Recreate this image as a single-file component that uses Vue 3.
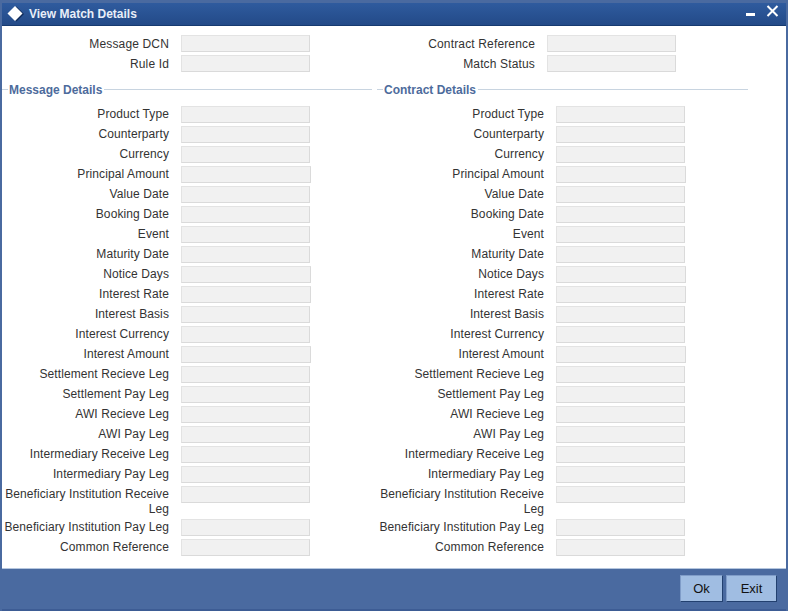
<template>
  <div class="window">
    <!-- Title bar -->
    <div class="titlebar">
      <svg class="logo" width="18" height="16" viewBox="0 0 18 16">
        <polygon points="9.5,0.5 17,8 9.5,15.5 2,8" fill="#0f2a58" />
        <polygon points="8,0 15.5,7.5 8,15 0.5,7.5" fill="#fff" />
      </svg>
      <span class="title">View Match Details</span>
      <div class="win-controls">
        <svg width="9" height="3" viewBox="0 0 9 3" class="min-icon"><rect width="9" height="3" fill="#fff" /></svg>
        <svg width="13" height="12" viewBox="0 0 13 12" class="close-icon">
          <path d="M1.5 1 L11.5 11 M11.5 1 L1.5 11" stroke="#fff" stroke-width="2" fill="none" />
        </svg>
      </div>
    </div>

    <!-- Form body -->
    <div class="body">
      <div class="head-rows">
        <div v-for="pair in headRows" :key="pair[0]" class="head-row">
          <div v-for="label in pair" :key="label" class="field head-field">
            <label>{{ label }}</label>
            <div class="input"></div>
          </div>
        </div>
      </div>

      <div class="sections">
        <div v-for="section in sections" :key="section.title" class="section">
          <div class="legend"><span>{{ section.title }}</span></div>
          <div class="rows">
            <div v-for="row in rows" :key="row.label" class="field">
              <label>{{ row.label }}</label>
              <div :class="['input', { wide: row.wide }]"></div>
            </div>
          </div>
        </div>
      </div>
    </div>

    <!-- Footer -->
    <div class="footer">
      <button class="btn ok">Ok</button>
      <button class="btn exit">Exit</button>
    </div>
  </div>
</template>

<script setup>
const headRows = [
  ['Message DCN', 'Contract Reference'],
  ['Rule Id', 'Match Status']
];

const sections = [{ title: 'Message Details' }, { title: 'Contract Details' }];

const rows = [
  { label: 'Product Type' },
  { label: 'Counterparty' },
  { label: 'Currency' },
  { label: 'Principal Amount', wide: true },
  { label: 'Value Date' },
  { label: 'Booking Date' },
  { label: 'Event' },
  { label: 'Maturity Date' },
  { label: 'Notice Days', wide: true },
  { label: 'Interest Rate', wide: true },
  { label: 'Interest Basis' },
  { label: 'Interest Currency' },
  { label: 'Interest Amount', wide: true },
  { label: 'Settlement Recieve Leg' },
  { label: 'Settlement Pay Leg' },
  { label: 'AWI Recieve Leg' },
  { label: 'AWI Pay Leg' },
  { label: 'Intermediary Receive Leg' },
  { label: 'Intermediary Pay Leg' },
  { label: 'Beneficiary Institution Receive Leg' },
  { label: 'Beneficiary Institution Pay Leg' },
  { label: 'Common Reference' }
];
</script>

<style>
html,
body {
  margin: 0;
  padding: 0;
}
</style>

<style scoped>
.window {
  width: 788px;
  height: 611px;
  box-sizing: border-box;
  display: flex;
  flex-direction: column;
  background: #4a6aa0;
  padding: 3px 2px 0 2px;
  font-family: 'Liberation Sans', Arial, sans-serif;
  font-size: 12px;
  color: #333;
  overflow: hidden;
}

.titlebar {
  height: 23px;
  flex: none;
  padding: 0 7px 0 5px;
  box-sizing: border-box;
  display: flex;
  align-items: center;
  border-bottom: 1px solid #163a70;
  background: linear-gradient(#2f5b9e, #234a88);
  color: #e8eef8;
}

.logo {
  flex: none;
  margin-right: 4px;
}

.title {
  font-weight: bold;
  font-size: 12px;
  flex: 1;
}

.win-controls {
  display: flex;
  align-items: flex-start;
  gap: 11px;
  height: 22px;
}

.min-icon {
  margin-top: 10px;
}

.close-icon {
  margin-top: 2px;
}

.body {
  flex: 1;
  background: #fff;
  padding-top: 9px;
  min-height: 0;
}

.head-rows {
  display: flex;
  flex-direction: column;
  gap: 1px;
}

.head-row {
  display: flex;
}

.head-row .head-field {
  width: 366px;
}

.sections {
  display: flex;
  margin-top: 6px;
}

.section {
  width: 375px;
}

.legend {
  height: 18px;
  display: flex;
  align-items: center;
  font-weight: bold;
  color: #4d6b9c;
}

.legend span {
  margin-right: 2px;
  padding-top: 2px;
}

.legend::before {
  content: '';
  width: 6px;
  margin-right: 1px;
  border-top: 1px solid #c8d4e0;
}

.legend::after {
  content: '';
  flex: 1;
  border-top: 1px solid #c8d4e0;
}

.section:first-child .legend {
  margin-right: 5px;
}

.section:last-child .legend {
  margin-right: 4px;
}

.rows {
  display: flex;
  flex-direction: column;
  gap: 3px;
  margin-top: 8px;
}

.field {
  display: flex;
  align-items: flex-start;
}

.field label {
  width: 167px;
  padding-left: 2px;
  box-sizing: border-box;
  text-align: right;
  letter-spacing: 0.1px;
  flex: none;
}

.head-field label {
  line-height: 19px;
  letter-spacing: 0.15px;
}

/* two line labels grow the row by one line less a pixel */
.rows .field label {
  line-height: 15px;
  padding-top: 1px;
  margin-bottom: -1px;
}

.input {
  width: 129px;
  height: 17px;
  margin-left: 12px;
  box-sizing: border-box;
  background: #f1f1f1;
  border: 1px solid #e3e3e3;
  border-bottom-color: #dadada;
  border-right-color: #dadada;
}

.input.wide {
  width: 130px;
}

.footer {
  height: 43px;
  flex: none;
  box-sizing: border-box;
  border-top: 1px solid #b5c6de;
  border-bottom: 2px solid #3d5c94;
  display: flex;
  justify-content: flex-end;
  gap: 3px;
  padding: 6px 9px 0 0;
}

.btn {
  height: 27px;
  padding: 0;
  box-sizing: border-box;
  background: #a0bde2;
  color: #111;
  font-family: inherit;
  font-size: 13px;
  border: 1px solid;
  border-color: #7f9cc8 #22406f #22406f #7f9cc8;
}

.ok {
  width: 43px;
}

.exit {
  width: 51px;
}
</style>
